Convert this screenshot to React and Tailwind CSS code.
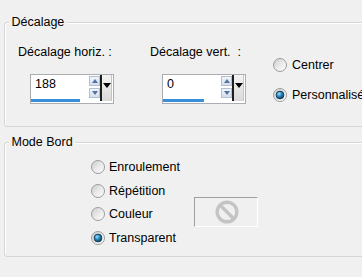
import React from 'react'

function Radio({ checked }) {
  return (
    <svg width="14" height="14" viewBox="0 0 14 14" className="shrink-0">
      <defs>
        <linearGradient id="radOff" x1="0" y1="0" x2="1" y2="1">
          <stop offset="0" stopColor="#cbcbcb" />
          <stop offset="0.55" stopColor="#ececec" />
          <stop offset="1" stopColor="#ffffff" />
        </linearGradient>
        <radialGradient id="radOn" cx="0.38" cy="0.35" r="0.7">
          <stop offset="0" stopColor="#9be2ff" />
          <stop offset="0.45" stopColor="#2a8cc4" />
          <stop offset="1" stopColor="#0b3552" />
        </radialGradient>
      </defs>
      <circle cx="7" cy="7" r="6.5" fill="url(#radOff)" stroke="#9c9c9c" />
      {checked && <circle cx="7" cy="7" r="3.9" fill="url(#radOn)" stroke="#173c58" strokeWidth="0.9" />}
    </svg>
  )
}

function SpinButton({ up }) {
  return (
    <div className="h-[10px] border border-[#b3bfd2] bg-gradient-to-b from-[#f1f5fb] to-[#d4deec] flex items-center justify-center">
      {up
        ? <div className="w-0 h-0 border-x-[3.5px] border-x-transparent border-b-[4px] border-b-[#5373a6]" />
        : <div className="w-0 h-0 border-x-[3.5px] border-x-transparent border-t-[4px] border-t-[#5373a6]" />}
    </div>
  )
}

function SpinBox({ value, barClass }) {
  return (
    <div className="w-[84px] h-[30px] border border-[#abadb3] bg-white flex">
      <div className="flex-1 flex flex-col justify-between">
        <span className="pl-[4px] pt-[2px] leading-[15px]">{value}</span>
        <div className={`h-[3px] mb-[1px] bg-[#3a8fdd] ${barClass}`} />
      </div>
      <div className="w-[11px] pt-[1px] flex flex-col gap-[2px]">
        <SpinButton up />
        <SpinButton />
      </div>
      <div className="w-[12px] h-[26px] mr-[1px] border-l-2 border-l-[#1e1e1e] border-r border-r-[#c4c4c4] bg-gradient-to-b from-[#f4f4f4] to-[#d9d9d9] flex justify-center pt-[8px]">
        <div className="w-0 h-0 border-x-[4px] border-x-transparent border-t-[5px] border-t-black" />
      </div>
    </div>
  )
}

function GroupBox({ title, className, children }) {
  return (
    <div className={`relative w-[400px] border border-[#d5d5d5] rounded-[3px] shadow-[inset_1px_1px_0_#ffffff] ${className}`}>
      <span className="absolute left-[4px] top-[-8px] px-[2.5px] bg-[#f0f0f0] leading-[15px]">{title}</span>
      {children}
    </div>
  )
}

function Option({ checked, label, gap }) {
  return (
    <div className={`h-[16px] flex items-center ${gap}`}>
      <Radio checked={checked} />
      <span className="leading-[16px] whitespace-nowrap">{label}</span>
    </div>
  )
}

export default function App() {
  return (
    <div className="w-[362px] h-[277px] overflow-hidden bg-[#f0f0f0] text-black text-[12.5px] font-['Liberation_Sans',Arial,sans-serif]">
      <div className="pt-[22px] pl-[4px] flex flex-col gap-[15px]">
        <GroupBox title="Décalage" className="h-[105px]">
          <div className="flex pt-[22px]">
            <div className="w-[145px] pl-[13px]">
              <div className="leading-[15px] whitespace-nowrap">Décalage horiz. :</div>
              <div className="mt-[14px] ml-[12px]">
                <SpinBox value="188" barClass="w-[49px]" />
              </div>
            </div>
            <div className="w-[123px]">
              <div className="leading-[15px] whitespace-nowrap">Décalage vert. &nbsp;:</div>
              <div className="mt-[14px] ml-[12px]">
                <SpinBox value="0" barClass="w-[41px]" />
              </div>
            </div>
            <div className="pt-[12px] flex flex-col gap-[14px]">
              <Option label="Centrer" gap="gap-[5px]" />
              <Option checked label="Personnalisé" gap="gap-[5px]" />
            </div>
          </div>
        </GroupBox>

        <GroupBox title="Mode Bord" className="h-[115px]">
          <div className="pt-[16px] pl-[86px] flex flex-col gap-[7.7px]">
            <Option label="Enroulement" gap="gap-[4px]" />
            <Option label="Répétition" gap="gap-[4px]" />
            <div className="h-[16px] flex items-center">
              <div className="w-[103px]">
                <Option label="Couleur" gap="gap-[4px]" />
              </div>
              <div className="-mt-[9.5px] -mb-[4.5px] w-[64px] h-[30px] border border-[#a0a0a0] border-r-white border-b-white flex items-center justify-center pl-[2px] pt-[1px]">
                <svg width="24" height="24" viewBox="0 0 24 24">
                  <circle cx="12" cy="12" r="9.8" fill="none" stroke="#c4c4c4" strokeWidth="3.4" />
                  <line x1="5.2" y1="5.2" x2="18.8" y2="18.8" stroke="#c4c4c4" strokeWidth="3.4" />
                </svg>
              </div>
            </div>
            <Option checked label="Transparent" gap="gap-[4px]" />
          </div>
        </GroupBox>
      </div>
    </div>
  )
}
